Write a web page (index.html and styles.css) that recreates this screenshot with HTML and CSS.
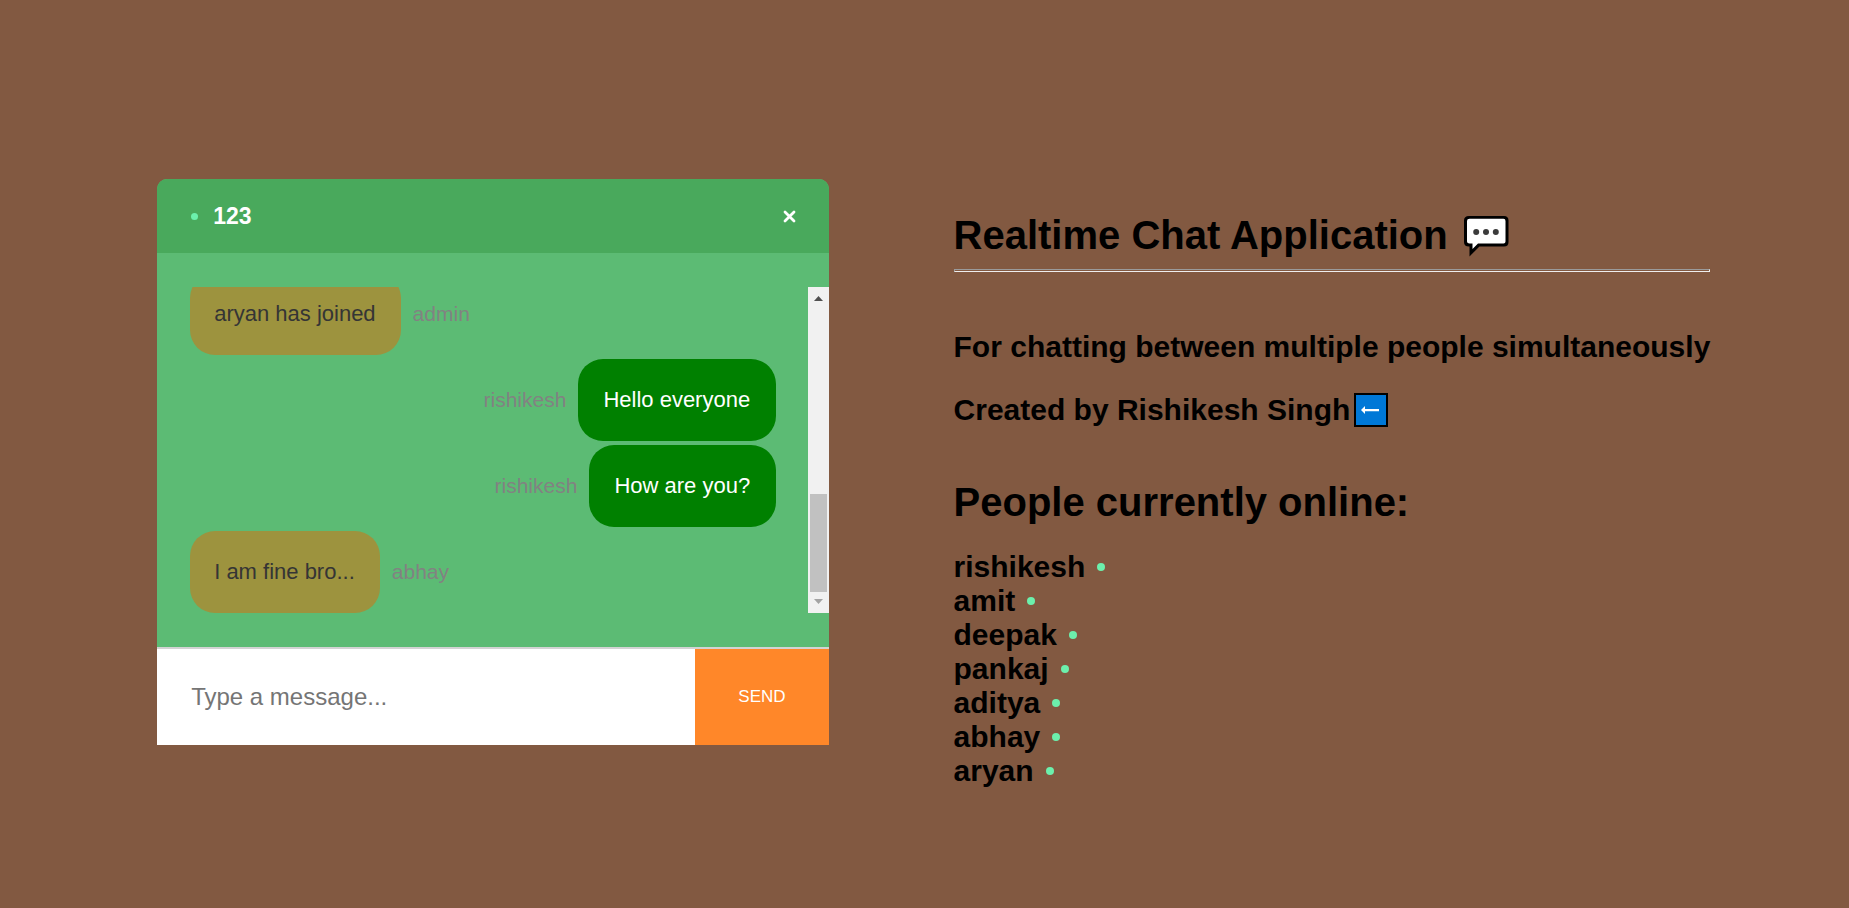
FILE: index.html
```html
<!DOCTYPE html>
<html lang="en">
<head>
<meta charset="utf-8">
<meta name="viewport" content="width=device-width, initial-scale=1">
<title>Realtime Chat Application</title>
<link rel="stylesheet" href="styles.css">
</head>
<body>
<main class="page">
  <section class="chat">
    <header class="chat-head">
      <span class="dot dot-small"></span>
      <h3 class="room">123</h3>
      <a class="close" href="#" aria-label="Leave room">
        <svg width="13" height="13" viewBox="0 0 13 13"><path d="M2 2L11 11M11 2L2 11" stroke="#fff" stroke-width="2.8" stroke-linecap="round"/></svg>
      </a>
    </header>
    <div class="chat-body">
      <div class="messages">
        <div class="message"><p class="bubble">aryan has joined</p><span class="sender">admin</span></div>
        <div class="message own"><span class="sender">rishikesh</span><p class="bubble">Hello everyone</p></div>
        <div class="message own"><span class="sender">rishikesh</span><p class="bubble">How are you?</p></div>
        <div class="message"><p class="bubble">I am fine bro...</p><span class="sender">abhay</span></div>
      </div>
      <div class="scrollbar">
        <svg class="arrow" width="21" height="21" viewBox="0 0 21 21"><path d="M6 14L10.500 9L15 14Z" fill="#505050"/></svg>
        <div class="thumb"></div>
        <svg class="arrow" width="21" height="21" viewBox="0 0 21 21"><path d="M6 7L10.500 12L15 7Z" fill="#a3a3a3"/></svg>
      </div>
    </div>
    <form class="composer">
      <input class="text" type="text" placeholder="Type a message..." aria-label="Message">
      <button class="send" type="button">SEND</button>
    </form>
  </section>
  <section class="info">
    <h1 class="title">Realtime Chat Application
      <svg class="speech" width="46" height="42" viewBox="0 0 46 42" aria-hidden="true"><path d="M6 2H41Q44.500 2 44.500 5.500V27Q44.500 30.500 41 30.500H16L7.500 39V30.500H6Q2 30.500 2 27V5.500Q2 2 6 2Z" fill="#000" stroke="#000" stroke-width="2"/><path d="M6.500 3.800H40.500Q42.500 3.800 42.500 6V26.500Q42.500 28.500 40.500 28.500H15L9.500 34V28.500H6.500Q4 28.500 4 26.500V6Q4 3.800 6.500 3.800Z" fill="#fff"/><g fill="#3b3b3b"><circle cx="13.200" cy="17" r="3"/><circle cx="23" cy="17" r="3"/><circle cx="32.800" cy="17" r="3"/></g></svg>
    </h1>
    <hr class="rule">
    <h2 class="line">For chatting between multiple people simultaneously</h2>
    <h2 class="line author">Created by Rishikesh Singh<svg class="back" width="34" height="34" viewBox="0 0 34 34" aria-hidden="true"><path d="M1 1H33V33H1Z" fill="#0078d7" stroke="#000" stroke-width="2"/><path d="M7 17L11 13V16H25V18.200H11V21Z" fill="#fff"/></svg></h2>
    <h1 class="title online">People currently online:</h1>
    <ul class="people">
      <li>rishikesh<span class="dot"></span></li>
      <li>amit<span class="dot"></span></li>
      <li>deepak<span class="dot"></span></li>
      <li>pankaj<span class="dot"></span></li>
      <li>aditya<span class="dot"></span></li>
      <li>abhay<span class="dot"></span></li>
      <li>aryan<span class="dot"></span></li>
    </ul>
  </section>
</main>
</body>
</html>
```
FILE: styles.css
```css
* { box-sizing: border-box; }
body {
  margin: 0;
  background: #825941;
  color: #000;
  font-family: "Liberation Sans", Arial, sans-serif;
  font-size: 20px;
}
h1, h2, h3, p, ul { margin: 0; padding: 0; }
.page {
  display: flex;
  justify-content: space-between;
  align-items: center;
  min-height: 100vh;
  padding: 16px 7.5% 0 8.5%;
}
.chat {
  flex: 0 1 672px;
  border-radius: 10px 10px 0 0;
  overflow: hidden;
  background: #5cbb74;
}
.chat-head {
  display: flex;
  align-items: center;
  height: 74px;
  padding: 0 33px 0 34px;
  background: #49a95c;
  color: #fff;
}
.dot {
  flex: none;
  width: 8px;
  height: 8px;
  border-radius: 50%;
  background: #6cf0ac;
}
.dot-small { width: 7px; height: 7px; }
.room {
  margin-left: 15px;
  font-size: 23px;
}
.close { display: flex; margin-left: auto; }
.chat-body {
  display: flex;
  height: 394px;
  padding: 34px 0;
}
.messages {
  flex: 1;
  display: flex;
  flex-direction: column;
  justify-content: flex-end;
  gap: 4px;
  padding: 0 32px 0 33px;
  overflow: hidden;
}
.message {
  display: flex;
  flex: none;
  align-items: center;
  gap: 12px;
}
.own { justify-content: flex-end; }
.bubble {
  padding: 28px 25px 28px 24px;
  border-radius: 25px;
  background: #9d933e;
  color: #353535;
  font-size: 22px;
  line-height: 26px;
}
.own .bubble { padding: 28px 26px 28px 25px; background: #008000; color: #fff; }
.sender { color: #828282; font-size: 21px; }
.scrollbar {
  display: flex;
  flex-direction: column;
  width: 21px;
  background: #f1f1f1;
}
.arrow { display: block; flex: none; }
.thumb {
  height: 98px;
  margin: auto 2px 0;
  background: #c1c1c1;
}
.composer { display: flex; border-top: 2px solid #d3d3d3; }
.text {
  flex: 1;
  min-width: 0;
  height: 96px;
  padding: 0 34px;
  border: 0;
  background: #fff;
  font: 24px "Liberation Sans", Arial, sans-serif;
}
.text::placeholder { color: #757575; }
.send {
  width: 20%;
  border: 0;
  padding: 0;
  background: #ff8729;
  color: #fff;
  font: 17px "Liberation Sans", Arial, sans-serif;
}
.info { padding-top: 76px; }
.title {
  display: flex;
  align-items: center;
  gap: 15px;
  height: 46px;
  font-size: 40px;
}
.rule {
  height: 3px;
  margin: 10px 0 58px;
  border: 1px solid;
  border-color: #9a9a9a #eee #eee #9a9a9a;
}
.line {
  height: 34px;
  margin-bottom: 29px;
  font-size: 30px;
}
.author {
  display: flex;
  align-items: center;
  gap: 4px;
}
.online { margin: 53px 0 24px; }
.people { list-style: none; font-size: 30px; font-weight: bold; }
.people li {
  display: flex;
  align-items: center;
  gap: 12px;
  height: 34px;
}
```
